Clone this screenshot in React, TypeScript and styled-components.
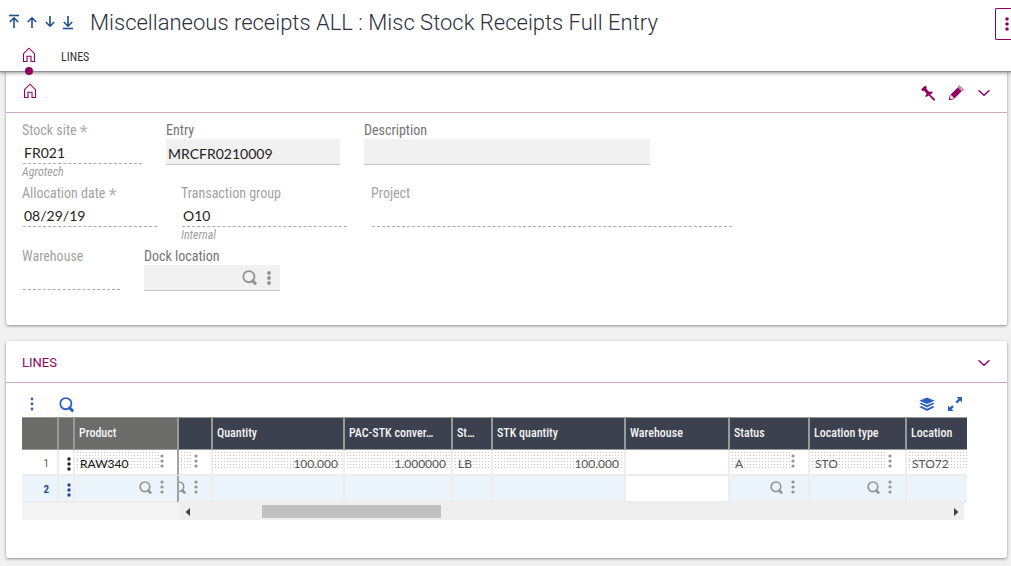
import React from "react";
import styled, { createGlobalStyle } from "styled-components";

const condensed = '"Roboto Condensed", "Liberation Sans Narrow", Roboto, sans-serif';

const colors = {
  brand: "#8f0060",
  brandLine: "#cfa5bf",
  blue: "#2b5fc0",
  navy: "#1d4f8c",
  ink: "#2c303e",
  head: "#3c414f",
  frozenHead: "#6c6c6b",
  headLine: "#969b96",
  line: "#ededed",
  grey: "#93948f",
};

const GlobalStyle = createGlobalStyle`
  *, *::before, *::after { box-sizing: border-box; }
  body {
    margin: 0;
    background: #f1f1f1;
    font-family: Roboto, sans-serif;
    color: ${colors.ink};
    overflow-x: hidden;
  }
  button { border: 0; padding: 0; background: none; font: inherit; color: inherit; cursor: pointer; }
  svg { display: block; }
`;

const PageHeader = styled.header`
  position: relative;
  z-index: 1;
  background: #fff;
  box-shadow: 0 1px 1px #8f928f, 0 2px 4px rgba(0, 0, 0, 0.4);
`;

const TitleRow = styled.div`
  display: flex;
  align-items: center;
  padding-left: 5px;
  height: 44px;
`;

const RecordNav = styled.nav`
  display: flex;
  width: 85px;
`;

const IconButton = styled.button<{ $w?: number; $color?: string }>`
  display: flex;
  flex: none;
  align-items: center;
  justify-content: center;
  width: ${(p) => p.$w ?? 18}px;
  color: ${(p) => p.$color ?? colors.brand};
`;

const Title = styled.h1`
  flex: 1;
  margin: 0;
  padding-top: 2px;
  font-size: 22px;
  line-height: 44px;
  font-weight: 325;
  color: ${colors.ink};
`;

const MoreButton = styled.button`
  display: flex;
  align-items: center;
  justify-content: flex-end;
  width: 16px;
  height: 32px;
  margin-top: 4px;
  padding-right: 1px;
  border: 1px solid ${colors.brand};
  border-right: 0;
  border-radius: 2px 0 0 2px;
  color: ${colors.brand};
`;

const TabBar = styled.nav`
  display: flex;
  padding-left: 20px;
  height: 27px;
`;

const Tab = styled.a<{ $active?: boolean }>`
  position: relative;
  display: flex;
  justify-content: center;
  min-width: 18px;
  margin-right: 23px;
  padding-top: 3px;
  font: 12px/20px ${condensed};
  color: ${(p) => (p.$active ? colors.brand : "#333")};
  text-decoration: none;
`;

const ActiveDot = styled.span`
  position: absolute;
  left: 5px;
  bottom: -4px;
  width: 8px;
  height: 8px;
  border-radius: 50%;
  background: ${colors.brand};
`;

const Main = styled.main`
  display: flex;
  flex-direction: column;
  gap: 16px;
  padding: 0 4px 8px 6px;
`;

const Card = styled.section`
  background: #fff;
  border-radius: 2px;
  box-shadow: 0 1px 3px rgba(0, 0, 0, 0.42);
`;

const CardHeader = styled.div`
  display: flex;
  align-items: center;
  height: 42px;
  padding: 3px 9px 0 16px;
  border-bottom: 1px solid ${colors.brandLine};
  color: ${colors.brand};
`;

const CardTitle = styled.h2<{ $icon?: boolean }>`
  display: flex;
  flex: 1;
  margin: 0;
  padding: ${(p) => (p.$icon ? "0 0 4px 1px" : "0")};
  font-size: 13px;
  line-height: 20px;
  font-weight: 400;
`;

const Form = styled.form`
  display: flex;
  flex-direction: column;
  gap: 6px;
  padding: 8px 16px 21px;
`;

const FormRow = styled.div`
  display: flex;
  gap: 24px;
`;

const FieldBox = styled.div<{ $w: number }>`
  display: flex;
  flex-direction: column;
  width: ${(p) => p.$w}px;
  height: 57px;
`;

const Label = styled.label<{ $muted?: boolean }>`
  font: 14px/18px ${condensed};
  color: ${(p) => (p.$muted ? "#a2a2a2" : "#747474")};
`;

const Required = styled.span`
  font-size: 18px;
  line-height: 14px;
  vertical-align: -3px;
  color: #b4b4b4;
`;

const ReadOnlyInput = styled.input`
  flex: none;
  height: 25px;
  width: auto;
  min-width: 0;
  margin-left: 1px;
  padding: 3px 1px 1px;
  border: 0;
  border-bottom: 1px dashed #aaa;
  outline: 0;
  background: none;
  font: 14px Lato, sans-serif;
  color: #222;
`;

const Control = styled.div`
  display: flex;
  align-items: center;
  height: 26px;
  padding-right: 1px;
  background: #f1f1f1;
  border-bottom: 1px solid #c4c4c4;
`;

const TextInput = styled.input`
  flex: 1;
  min-width: 0;
  height: 25px;
  padding: 4px 2px 0;
  border: 0;
  outline: 0;
  background: none;
  font: 14px Lato, sans-serif;
  color: #222;
`;

const Hint = styled.span`
  font: italic 12px/16px ${condensed};
  color: #a0a0a0;
`;

const GridArea = styled.div`
  padding: 8px 40px 38px 16px;
`;

const GridTools = styled.div`
  display: flex;
  align-items: center;
  height: 26px;
  padding-left: 2px;
`;

const Spacer = styled.span`
  flex: 1;
`;

const Grid = styled.table`
  width: 100%;
  table-layout: fixed;
  border-collapse: separate;
  border-spacing: 0;
`;

const HeadCell = styled.th<{ $frozen?: boolean; $first?: boolean }>`
  height: 33px;
  padding: 0 0 2px 4px;
  border: solid ${colors.headLine};
  border-width: 1px 0 1px ${(p) => (p.$first ? 0 : 2)}px;
  background: ${(p) => (p.$frozen ? colors.frozenHead : colors.head)};
  color: #f4f4f4;
  font: 500 12px/20px ${condensed};
  text-align: left;
  white-space: nowrap;
`;

const Row = styled.tr<{ $selected?: boolean }>`
  height: ${(p) => (p.$selected ? 27 : 25)}px;
  background: ${(p) => (p.$selected ? "#ebf3fb" : "#fff")};
`;

const Cell = styled.td<{ $edge?: boolean; $first?: boolean; $blank?: boolean }>`
  padding: 0;
  height: inherit;
  border: solid ${colors.line};
  border-width: 0 0 2px ${(p) => (p.$first ? 0 : 2)}px;
  border-left-color: ${(p) => (p.$edge ? "#a3a3a3" : colors.line)};
  ${(p) => p.$blank && "background: #fff;"}
  vertical-align: top;
  overflow: hidden;
`;

const CellLine = styled.div`
  display: flex;
  justify-content: flex-end;
  align-items: center;
  height: 22px;
`;

const Dotted = styled.span<{ $right?: boolean; $strong?: boolean }>`
  flex: 1;
  min-width: 0;
  height: 20px;
  margin-bottom: 2px;
  padding: 4px 5px 0;
  background-image: linear-gradient(90deg, #fff 2px, transparent 2px), linear-gradient(#fff 2px, #c4c4c4 2px);
  background-size: 3px 3px;
  font: 12px/20px Lato, sans-serif;
  color: ${(p) => (p.$strong ? "#111" : "#555")};
  text-align: ${(p) => (p.$right ? "right" : "left")};
  white-space: nowrap;
`;

const RowNumber = styled.span<{ $selected?: boolean }>`
  display: block;
  padding: 4px 8px 0 0;
  font: ${(p) => (p.$selected ? 700 : 400)} 11px/20px ${condensed};
  color: ${(p) => (p.$selected ? colors.navy : "#555")};
  text-align: right;
`;

const RowMenu = styled.div`
  padding: 6px 0 0 2px;
`;

const CellAction = styled.button<{ $w: number }>`
  display: flex;
  flex: none;
  width: ${(p) => p.$w}px;
  color: ${colors.grey};
`;

const CellInput = styled.input`
  display: block;
  width: 100%;
  height: 24px;
  border: 0;
  outline: 0;
  background: #fff;
`;

const ScrollRow = styled.div`
  display: flex;
  height: 17px;
  margin-right: 3px;
  background: #f4f4f4;
`;

const ScrollBar = styled.div`
  display: flex;
  flex: 1;
  align-items: center;
  justify-content: space-between;
  margin-left: 158px;
  padding: 0 4px;
  background: #efefef;
  color: #444;
`;

const Track = styled.div`
  flex: 1;
  padding-left: 9%;
`;

const Thumb = styled.div`
  width: 26%;
  height: 13px;
  background: #c0c0c0;
`;

/* ---- icons ---- */

const Arrow = ({ down, bar }: { down?: boolean; bar?: boolean }) => (
  <svg width="12" height="16" viewBox="0 0 12 16" fill="none" stroke={colors.navy} strokeWidth="1.6">
    <g transform={down ? "rotate(180 6 8)" : undefined}>
      {bar && <path d="M1 1.5h10" />}
      <path d="M6 14V3.5M1.8 8L6 3.8 10.2 8" />
    </g>
  </svg>
);

const Home = () => (
  <svg width="14" height="16" viewBox="0 0 14 16" fill="none" stroke="currentColor" strokeWidth="1.1">
    <path d="M1.5 14.5V6.7L7 1.2l5.5 5.5v7.8H9V9.2H5v5.3z" />
  </svg>
);

const Dots = ({ r = 1.5, gap = 5 }: { r?: number; gap?: number }) => (
  <svg width="6" height="16" viewBox="0 0 6 16" fill="currentColor">
    <circle cx="3" cy={8 - gap} r={r} />
    <circle cx="3" cy="8" r={r} />
    <circle cx="3" cy={8 + gap} r={r} />
  </svg>
);

const Search = ({ size = 14 }: { size?: number }) => (
  <svg width={size} height={size} viewBox="0 0 14 14" fill="none" stroke="currentColor">
    <circle cx="6.4" cy="6.2" r="5.2" strokeWidth="1.7" />
    <path d="M10 10.200l2.300 2.300" strokeWidth="2.8" strokeLinecap="round" />
  </svg>
);

const Chevron = () => (
  <svg width="14" height="8" viewBox="0 0 14 8" fill="none" stroke="currentColor" strokeWidth="1.4">
    <path d="M1.500 1.200L7 6.200l5.500-5" />
  </svg>
);

const Pin = () => (
  <svg width="16" height="16" viewBox="0 0 16 16" fill="currentColor">
    <path d="M5.200 .6L1 4.500l1.500 1.400 1.600-.1 2.600 2.900-1.600 2.500 1 .7 2.800-1.500 4.600 5 1.500.1-.1-1.500-4.700-4.600 2.600-1.600-.6-1.200-3.200.2-2.500-2.700.2-1.800z" />
  </svg>
);

const Pencil = () => (
  <svg width="16" height="16" viewBox="0 0 16 16">
    <path d="M2.600 9.600L9.800 2.400l3.800 3.800-7.200 7.200z" fill="currentColor" />
    <path d="M10.300 1.900l1.100-1 3.700 3.700-1 1.100zM2.300 10.200L1.200 14.800l4.600-1.100" fill="none" stroke="currentColor" strokeWidth=".9" />
    <path d="M1.200 14.800l.5-2 1.500 1.500z" fill="currentColor" />
  </svg>
);

const Layers = () => (
  <svg width="16" height="15" viewBox="0 0 16 15" fill="currentColor">
    <path d="M8 .5l7.700 3.300L8 7.100.3 3.800z" />
    <path d="M.3 6.600l2-.9L8 8.200l5.700-2.500 2 .9L8 10.500z" />
    <path d="M.3 10l2-.9L8 11.700l5.700-2.600 2 .9L8 14z" />
  </svg>
);

const Expand = () => (
  <svg width="16" height="16" viewBox="0 0 16 16" fill="currentColor">
    <path d="M9.500 1H15v5.500l-1.900-1.900-2.900 2.900-1.700-1.700L11.400 2.900zM1 9.500l1.900 1.900L5.100 9.200l1.700 1.700-2.200 2.200L6.500 15H1z" />
  </svg>
);

const Triangle = ({ right }: { right?: boolean }) => (
  <svg width="8" height="8" viewBox="0 0 8 8" fill="currentColor">
    <path d={right ? "M2 0v8l4.500-4z" : "M6 0v8L1.500 4z"} />
  </svg>
);

/* ---- parts ---- */

type FieldProps = {
  id: string;
  label: string;
  width: number;
  value?: string;
  hint?: string;
  readOnly?: boolean;
  required?: boolean;
  children?: React.ReactNode;
};

const Field = ({ id, label, width, value = "", hint, readOnly, required, children }: FieldProps) => (
  <FieldBox $w={width}>
    <Label htmlFor={id} $muted={readOnly}>
      {label}
      {required && <> <Required>*</Required></>}
    </Label>
    {readOnly ? (
      <ReadOnlyInput id={id} defaultValue={value} readOnly />
    ) : (
      <Control>
        <TextInput id={id} defaultValue={value} />
        {children}
      </Control>
    )}
    {hint && <Hint>{hint}</Hint>}
  </FieldBox>
);

type Column = {
  title: string;
  width?: number;
  value?: string;
  right?: boolean;
  strong?: boolean;
  menu?: boolean;
  lookup?: boolean;
  frozen?: boolean;
  edge?: boolean;
  editable?: boolean;
};

const columns: Column[] = [
  { title: "Product", width: 104, value: "RAW340", strong: true, menu: true, lookup: true, frozen: true },
  { title: "", width: 34, value: "", menu: true, lookup: true, edge: true },
  { title: "Quantity", width: 132, value: "100.000", right: true },
  { title: "PAC-STK conver…", width: 108, value: "1.000000", right: true },
  { title: "St…", width: 40, value: "LB" },
  { title: "STK quantity", width: 133, value: "100.000", right: true },
  { title: "Warehouse", width: 104, editable: true },
  { title: "Status", width: 80, value: "A", menu: true, lookup: true },
  { title: "Location type", width: 97, value: "STO", menu: true, lookup: true },
  { title: "Location", value: "STO72" },
];

export default function App() {
  return (
    <>
      <GlobalStyle />
      <PageHeader>
        <TitleRow>
          <RecordNav aria-label="Records">
            <IconButton aria-label="First"><Arrow bar /></IconButton>
            <IconButton aria-label="Previous"><Arrow /></IconButton>
            <IconButton aria-label="Next"><Arrow down /></IconButton>
            <IconButton aria-label="Last"><Arrow down bar /></IconButton>
          </RecordNav>
          <Title>Miscellaneous receipts ALL : Misc Stock Receipts Full Entry</Title>
          <MoreButton aria-label="More actions"><Dots r={1.8} /></MoreButton>
        </TitleRow>
        <TabBar>
          <Tab href="#home" $active aria-label="Home"><Home /><ActiveDot /></Tab>
          <Tab href="#lines">LINES</Tab>
        </TabBar>
      </PageHeader>

      <Main>
        <Card id="home">
          <CardHeader>
            <CardTitle $icon aria-label="Home"><Home /></CardTitle>
            <IconButton $w={28} aria-label="Pin"><Pin /></IconButton>
            <IconButton $w={28} aria-label="Edit"><Pencil /></IconButton>
            <IconButton $w={28} aria-label="Collapse"><Chevron /></IconButton>
          </CardHeader>
          <Form>
            <FormRow>
              <Field id="site" label="Stock site" width={120} value="FR021" hint="Agrotech" readOnly required />
              <Field id="entry" label="Entry" width={174} value="MRCFR0210009" />
              <Field id="description" label="Description" width={286} />
            </FormRow>
            <FormRow>
              <Field id="date" label="Allocation date" width={135} value="08/29/19" readOnly required />
              <Field id="group" label="Transaction group" width={166} value="O10" hint="Internal" readOnly />
              <Field id="project" label="Project" width={361} readOnly />
            </FormRow>
            <FormRow>
              <Field id="warehouse" label="Warehouse" width={98} readOnly />
              <Field id="dock" label="Dock location" width={136}>
                <IconButton type="button" $w={20} $color={colors.grey} aria-label="Search dock location"><Search size={15} /></IconButton>
                <IconButton type="button" $w={20} $color={colors.grey} aria-label="Dock location menu"><Dots r={1.9} /></IconButton>
              </Field>
            </FormRow>
          </Form>
        </Card>

        <Card id="lines">
          <CardHeader>
            <CardTitle>LINES</CardTitle>
            <IconButton $w={28} aria-label="Collapse lines"><Chevron /></IconButton>
          </CardHeader>
          <GridArea>
            <GridTools>
              <IconButton $w={16} $color={colors.blue} aria-label="Grid menu"><Dots r={1.4} /></IconButton>
              <IconButton $w={52} $color={colors.blue} aria-label="Search lines"><Search size={15} /></IconButton>
              <Spacer />
              <IconButton $w={32} $color={colors.blue} aria-label="Layers"><Layers /></IconButton>
              <IconButton $w={24} $color={colors.blue} aria-label="Full screen"><Expand /></IconButton>
            </GridTools>
            <Grid>
              <colgroup>
                <col style={{ width: 35 }} />
                <col style={{ width: 16 }} />
                {columns.map((c, i) => <col key={i} style={{ width: c.width }} />)}
              </colgroup>
              <thead>
                <tr>
                  <HeadCell $frozen $first />
                  <HeadCell $frozen />
                  {columns.map((c, i) => <HeadCell key={i} $frozen={c.frozen}>{c.title}</HeadCell>)}
                </tr>
              </thead>
              <tbody>
                <Row>
                  <Cell $first><RowNumber>1</RowNumber></Cell>
                  <Cell>
                    <RowMenu><IconButton $w={16} $color="#222" aria-label="Line 1 menu"><Dots r={1.7} /></IconButton></RowMenu>
                  </Cell>
                  {columns.map((c, i) => (
                    <Cell key={i} $edge={c.edge}>
                      {c.editable ? null : (
                        <CellLine>
                          <Dotted $right={c.right} $strong={c.strong}>{c.value}</Dotted>
                          {c.menu && <CellAction $w={18} aria-label={`${c.title} menu`}><Dots r={1.6} /></CellAction>}
                        </CellLine>
                      )}
                    </Cell>
                  ))}
                </Row>
                <Row $selected>
                  <Cell $first><RowNumber $selected>2</RowNumber></Cell>
                  <Cell>
                    <RowMenu><IconButton $w={16} $color={colors.navy} aria-label="Line 2 menu"><Dots r={1.7} /></IconButton></RowMenu>
                  </Cell>
                  {columns.map((c, i) => (
                    <Cell key={i} $edge={c.edge} $blank={c.editable}>
                      {c.editable ? <CellInput aria-label={c.title} /> : (
                        <CellLine>
                          {c.lookup && <CellAction $w={20} aria-label={`Search ${c.title}`}><Search size={13} /></CellAction>}
                          {c.menu && <CellAction $w={18} aria-label={`${c.title} menu`}><Dots r={1.6} /></CellAction>}
                        </CellLine>
                      )}
                    </Cell>
                  ))}
                </Row>
              </tbody>
            </Grid>
            <ScrollRow>
              <ScrollBar>
                <Triangle />
                <Track><Thumb /></Track>
                <Triangle right />
              </ScrollBar>
            </ScrollRow>
          </GridArea>
        </Card>
      </Main>
    </>
  );
}
